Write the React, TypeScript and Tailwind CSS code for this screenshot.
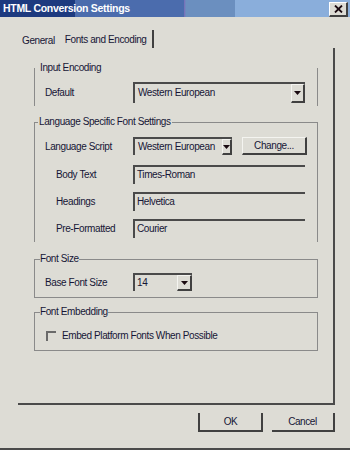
import React from "react";

const TXT = "text-[#161636]";

function Arrow() {
  return (
    <svg width="7" height="4" viewBox="0 0 7 4">
      <path d="M0 0h7L3.5 4z" fill="#1a0a10" />
    </svg>
  );
}

function ArrowBtn({ cls }: { cls: string }) {
  return (
    <div
      className={`flex items-center justify-center border-t border-l border-t-[#f4f4f0] border-l-[#f4f4f0] border-r-2 border-b-2 border-r-[#404040] border-b-[#404040] ${cls}`}
    >
      <Arrow />
    </div>
  );
}

function Field({ value }: { value: string }) {
  return (
    <div className={`h-[19px] w-[172px] border-t-2 border-l-2 border-t-[#4a4a4a] border-l-[#4a4a4a] pl-[2px] leading-[16px] ${TXT}`}>
      {value}
    </div>
  );
}

export default function App() {
  return (
    <div className="w-[350px] h-[450px] bg-[#dddcd5] flex flex-col border-b-2 border-b-[#4a4a4a] font-['Liberation_Sans',Arial,sans-serif] text-[10px] tracking-[-0.4px] overflow-hidden">
      {/* title bar */}
      <div className="h-[17px] flex items-center bg-[linear-gradient(to_right,#1d3a7f_0,#1d3a7f_75px,#4b6cad_75px,#4b6cad_184px,#7a6ab8_184px,#6b8fbf_186px,#6b8fbf_235px,#8aaedb_235px,#8aaedb_100%)]">
        <div className="pl-[3px] text-white font-bold text-[10.5px] tracking-[-0.3px] flex-1 leading-none">
          HTML Conversion Settings
        </div>
        <div className="mr-[2px] mt-[1px] w-[19px] h-[15px] bg-[#dddcd5] border-t border-l border-t-white border-l-white border-r-2 border-b-2 border-r-[#404040] border-b-[#404040] flex items-center justify-center">
          <svg width="9" height="8" viewBox="0 0 9 8">
            <path d="M1 0.5L8 7.5M8 0.5L1 7.5" stroke="#1a0a10" strokeWidth="1.8" />
          </svg>
        </div>
      </div>

      {/* tabs */}
      <div className={`mt-[13px] h-[18px] flex items-center ${TXT}`}>
        <span className="ml-[22px] mt-[2px]">General</span>
        <span className="ml-[10px] pr-[5px] h-full flex items-center border-r-2 border-r-[#404040]">Fonts and Encoding</span>
      </div>

      {/* panel */}
      <div className={`ml-[18px] w-[317px] h-[357px] border-r-2 border-b-2 border-r-[#4a4a4a] border-b-[#4a4a4a] pl-[16px] pt-[14px] flex flex-col ${TXT}`}>
        {/* Input Encoding */}
        <fieldset className="w-[284px] border-x border-x-[#8a8a8a] border-y-0 pb-[3px]">
          <legend className="ml-[5px] leading-[12px]">Input Encoding</legend>
          <div className="mt-[8px] flex items-center">
            <span className="pl-[10px] w-[98px]">Default</span>
            <div className="w-[172px] h-[21px] flex border-t-2 border-l-2 border-t-[#4a4a4a] border-l-[#4a4a4a]">
              <div className="flex-1 pl-[3px] leading-[18px]">Western European</div>
              <ArrowBtn cls="w-[14px] h-[19px]" />
            </div>
          </div>
        </fieldset>

        {/* Language Specific Font Settings */}
        <fieldset className="mt-[10px] w-[284px] border-x border-t border-x-[#8a8a8a] border-t-[#8a8a8a] border-b-0 pb-[4px]">
          <legend className="ml-[3px] px-[1px] leading-[12px]">Language Specific Font Settings</legend>
          <div className="mt-[9px] flex items-center">
            <span className="pl-[10px] w-[98px]">Language Script</span>
            <div className="w-[99px] h-[18px] flex border-t-2 border-l-2 border-t-[#4a4a4a] border-l-[#4a4a4a]">
              <div className="flex-1 pl-[3px] leading-[15px] overflow-hidden whitespace-nowrap">Western European</div>
              <ArrowBtn cls="w-[10px] h-[16px]" />
            </div>
            <div className="ml-[10px] w-[65px] h-[18px] border-t border-l border-t-[#f4f4f0] border-l-[#f4f4f0] border-r-2 border-b-2 border-r-[#404040] border-b-[#404040] flex items-center justify-center">
              Change...
            </div>
          </div>
          <div className="mt-[10px] flex items-center">
            <span className="pl-[21px] w-[98px]">Body Text</span>
            <Field value="Times-Roman" />
          </div>
          <div className="mt-[8px] flex items-center">
            <span className="pl-[21px] w-[98px]">Headings</span>
            <Field value="Helvetica" />
          </div>
          <div className="mt-[8px] flex items-center">
            <span className="pl-[21px] w-[98px]">Pre-Formatted</span>
            <Field value="Courier" />
          </div>
        </fieldset>

        {/* Font Size */}
        <fieldset className="mt-[11px] w-[284px] border border-[#8a8a8a] pb-[6px]">
          <legend className="ml-[5px] leading-[12px]">Font Size</legend>
          <div className="mt-[8px] flex items-center">
            <span className="pl-[10px] w-[98px]">Base Font Size</span>
            <div className="w-[59px] h-[18px] flex border-t-2 border-l-2 border-t-[#4a4a4a] border-l-[#4a4a4a]">
              <div className="flex-1 pl-[2px] leading-[15px]">14</div>
              <ArrowBtn cls="w-[15px] h-[16px]" />
            </div>
          </div>
        </fieldset>

        {/* Font Embedding */}
        <fieldset className="mt-[8px] w-[284px] border border-[#8a8a8a] pb-[7px]">
          <legend className="ml-[5px] leading-[12px]">Font Embedding</legend>
          <div className="mt-[10px] flex items-center">
            <div className="ml-[11px] w-[10px] h-[10px] border-t-2 border-l-2 border-t-[#6a6a6a] border-l-[#6a6a6a]" />
            <span className="ml-[6px]">Embed Platform Fonts When Possible</span>
          </div>
        </fieldset>
      </div>

      {/* buttons */}
      <div className={`mt-[8px] flex ${TXT}`}>
        <div className="ml-[198px] w-[65px] h-[19px] border-l-2 border-r-2 border-b-2 border-[#404040] flex items-center justify-center">
          OK
        </div>
        <div className="ml-[9px] w-[63px] h-[19px] border-r-2 border-b-2 border-[#404040] flex items-center justify-center">
          Cancel
        </div>
      </div>
    </div>
  );
}
